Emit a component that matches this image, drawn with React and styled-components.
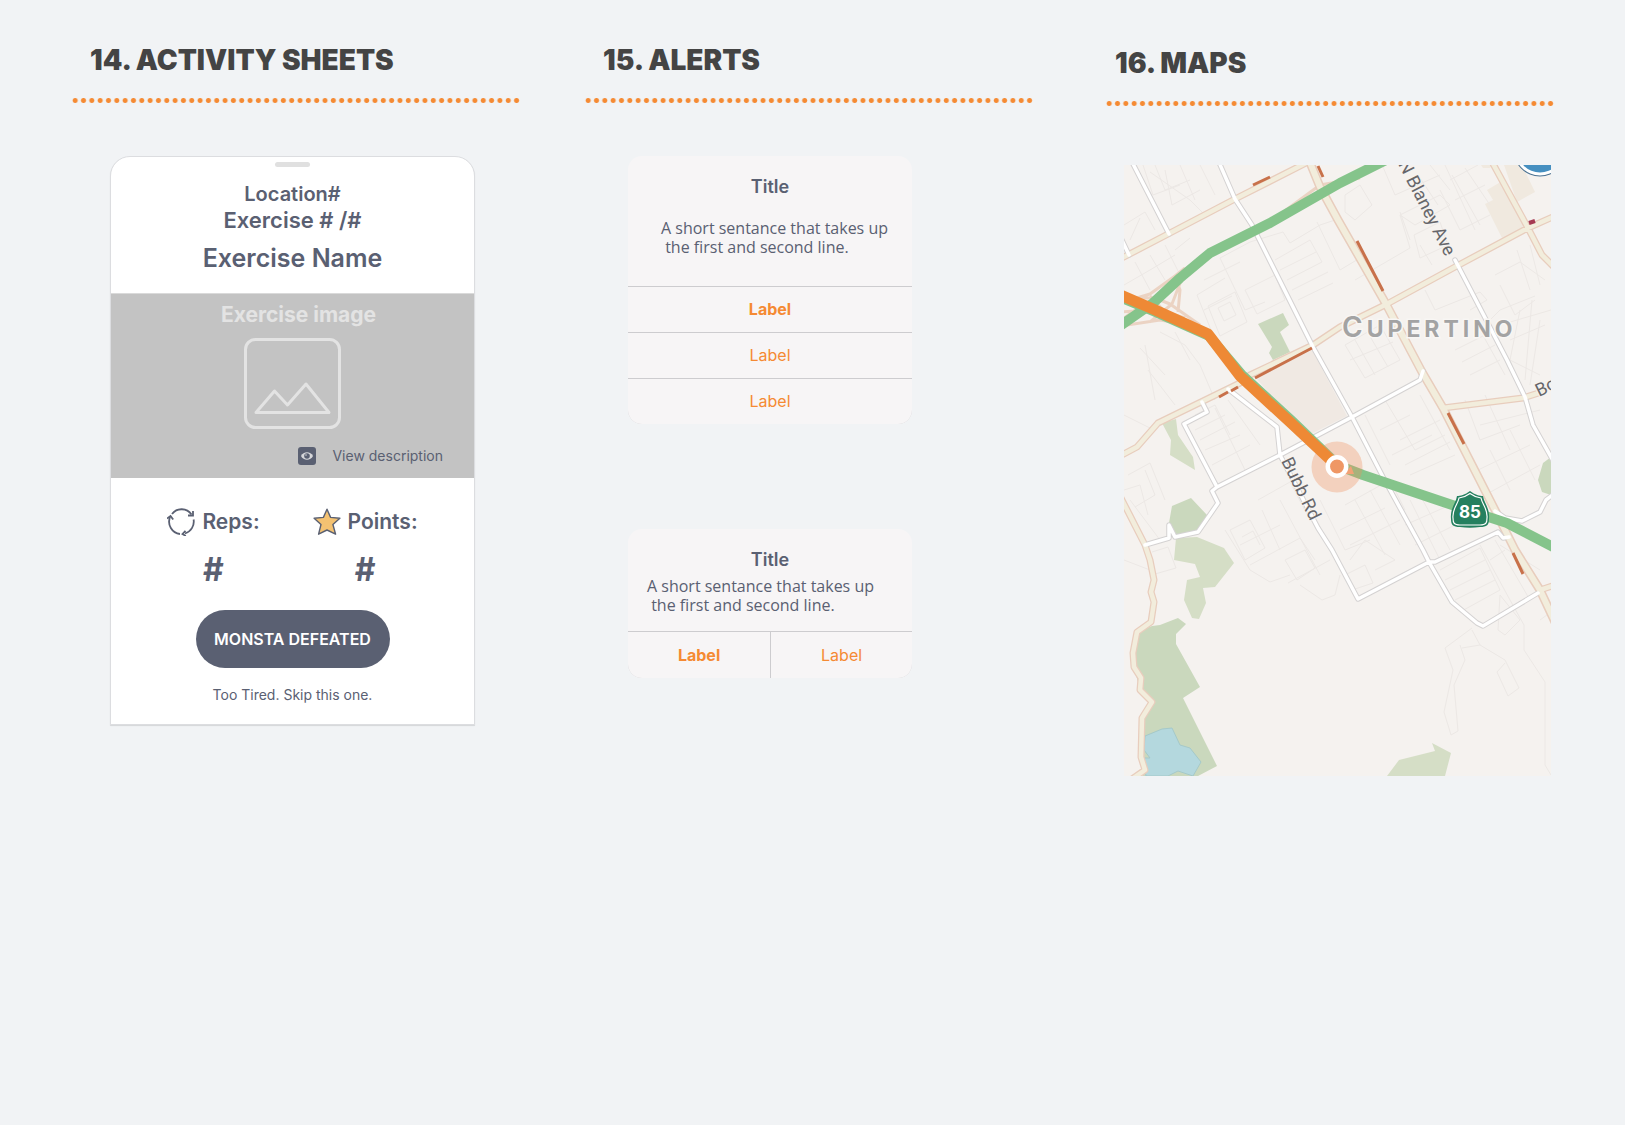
import React from 'react';
import styled, { createGlobalStyle } from 'styled-components';

const color = {
  page: '#f1f3f5',
  heading: '#444444',
  orange: '#f58a33',
  slate: '#5a6072',
  alert: '#f7f5f6',
  line: '#cdcccf',
  placeholder: '#c3c3c3',
  placeholderInk: '#e3e3e3',
};

const GlobalStyle = createGlobalStyle`
  *, *::before, *::after { box-sizing: border-box; }
  body {
    margin: 0;
    background: ${color.page};
    color: ${color.slate};
    font-family: Inter, "Liberation Sans", sans-serif;
  }
  h2, h3, p, dl, dt, dd { margin: 0; }
`;

/* ---------- Page ---------- */

const Page = styled.main`
  display: flex;
  align-items: flex-start;
  padding: 42px 70px 42px 71px;
  min-height: 100vh;
`;

const Column = styled.section`
  flex: 1 1 0;
  min-width: 0;
  margin-right: ${(p) => p.$gutter || 0}px;
  padding-top: ${(p) => p.$drop || 0}px;
`;

const Heading = styled.h2`
  padding-left: ${(p) => p.$indent}px;
  font-size: 28px;
  line-height: 36px;
  font-weight: 900;
  color: ${color.heading};
  white-space: nowrap;
`;

const DottedRule = styled.hr`
  height: 5px;
  margin: 20px 0 0;
  border: 0;
  background-image: radial-gradient(circle at center, ${color.orange} 2px, transparent 3px);
  background-size: calc(100% / 54) 5px;
`;

/* ---------- Activity sheet ---------- */

const Sheet = styled.article`
  display: flex;
  flex-direction: column;
  align-items: center;
  margin: 53px 46px 0 39px;
  padding: 5px 0 19px;
  border: 1px solid #dcdde0;
  border-radius: 20px 20px 0 0;
  background: #ffffff;
  box-shadow: 0 1px 1px rgba(0, 0, 0, 0.12);
`;

const Handle = styled.span`
  width: 35px;
  height: 5px;
  margin-bottom: 14px;
  border-radius: 3px;
  background: #e0e0e0;
`;

const SheetLine = styled.p`
  font-size: ${(p) => p.$size}px;
  line-height: 26px;
  font-weight: 600;
`;

const SheetTitle = styled.h3`
  margin: 9px 0 19px;
  font-size: 25px;
  line-height: 32px;
  font-weight: 600;
`;

const Preview = styled.figure`
  align-self: stretch;
  display: flex;
  flex-direction: column;
  align-items: center;
  margin: 0;
  padding: 8px 0 13px;
  border-top: 1px solid #dadada;
  background: ${color.placeholder};
`;

const PreviewCaption = styled.figcaption`
  padding-left: 12px;
  margin-bottom: 10px;
  font-size: 21px;
  line-height: 26px;
  font-weight: 700;
  color: ${color.placeholderInk};
`;

const DescriptionLink = styled.a`
  align-self: flex-end;
  display: flex;
  align-items: center;
  gap: 16px;
  margin: 18px 31px 0 0;
  font-size: 14px;
  line-height: 18px;
  color: ${color.slate};
  text-decoration: none;
`;

const Stats = styled.dl`
  display: flex;
  gap: 53px;
  margin-top: 30px;
`;

const Stat = styled.div`
  display: flex;
  flex-direction: column;
  align-items: center;
  gap: 16px;
`;

const StatName = styled.dt`
  display: flex;
  align-items: center;
  gap: 7px;
  font-size: 21px;
  line-height: 28px;
  font-weight: 600;
`;

const StatValue = styled.dd`
  font-size: 32px;
  line-height: 36px;
  font-weight: 700;
`;

const PrimaryButton = styled.button`
  width: 194px;
  height: 58px;
  margin-top: 22px;
  padding: 0;
  border: 0;
  border-radius: 29px;
  background: ${color.slate};
  color: #ffffff;
  font: 600 16px/20px Inter, sans-serif;
  white-space: nowrap;
`;

const TextButton = styled.button`
  margin-top: 17px;
  padding: 0;
  border: 0;
  background: none;
  color: ${color.slate};
  font: 400 14px/20px Inter, sans-serif;
`;

/* ---------- Alerts ---------- */

const AlertStack = styled.div`
  display: flex;
  flex-direction: column;
  gap: 105px;
  margin: 53px 0 0 44px;
  max-width: 284px;
`;

const AlertBox = styled.article`
  overflow: hidden;
  border-radius: 14px;
  background: ${color.alert};
`;

const AlertTitle = styled.h3`
  padding-top: 20px;
  font-size: 18px;
  line-height: 22px;
  font-weight: 600;
  text-align: center;
`;

const AlertText = styled.p`
  padding: ${(p) => (p.$compact ? '6px 0 16px 19px' : '21px 0 29px 33px')};
  font: 500 16px/19px "Open Sans", sans-serif;
  white-space: pre;
`;

const Actions = styled.div`
  display: flex;
  flex-direction: ${(p) => (p.$row ? 'row' : 'column')};
  gap: 1px;
  padding-top: 1px;
  background: ${color.line};
`;

const ActionButton = styled.button`
  flex: 1 1 auto;
  height: ${(p) => (p.$row ? 46 : 45)}px;
  padding: ${(p) => (p.$row ? '0' : '0 0 2px')};
  border: 0;
  background: ${color.alert};
  color: ${color.orange};
  font: ${(p) => (p.$strong ? 700 : 400)} 16px/20px Inter, sans-serif;
`;

function Alert({ compact, labels }) {
  return (
    <AlertBox>
      <AlertTitle>Title</AlertTitle>
      <AlertText $compact={compact}>
        {'A short sentance that takes up\n the first and second line.'}
      </AlertText>
      <Actions $row={compact}>
        {labels.map((label, i) => (
          <ActionButton key={i} type="button" $row={compact} $strong={i === 0}>
            {label}
          </ActionButton>
        ))}
      </Actions>
    </AlertBox>
  );
}

/* ---------- Icons ---------- */

const PictureIcon = () => (
  <svg width="97" height="91" viewBox="0 0 97 91" fill="none" stroke={color.placeholderInk} strokeWidth="3" aria-hidden="true">
    <rect x="1.5" y="1.5" width="94" height="88" rx="10" />
    <path d="M12 74.5 30.500 53 43.500 67 62 46 85 74.500Z" strokeLinejoin="round" />
  </svg>
);

const EyeIcon = () => (
  <svg width="18" height="18" viewBox="0 0 18 18" aria-hidden="true">
    <rect width="18" height="18" rx="3" fill={color.slate} />
    <path d="M3 9C5.500 4 12.500 4 15 9 12.500 14 5.500 14 3 9Z" fill="#d6d7da" />
    <circle cx="9" cy="9" r="2.800" fill={color.slate} />
    <circle cx="8" cy="8" r="0.900" fill="#a9acb5" />
  </svg>
);

const RepsIcon = () => (
  <svg width="28" height="28" viewBox="0 0 28 28" fill="none" stroke={color.slate} strokeWidth="1.8" aria-hidden="true">
    <path d="M5 6A12 12 0 0 1 24.500 6.500" />
    <path d="M26.600 11.500A12.500 12.500 0 0 1 18 25.500" />
    <path d="M13 26A12.500 12.500 0 0 1 3 9" />
    <path d="M0 10.500 3.500 8 6.200 11.500" />
    <path d="M26 3V7.500H21" />
    <path d="M18.500 22.800 15.500 26 18.800 28" />
  </svg>
);

const StarIcon = () => (
  <svg width="28" height="28" viewBox="0 0 28 28" aria-hidden="true">
    <path
      d="M14 1.200 17.600 9.400 26.900 10.300 19.900 16.500 22.600 26.200 14 22 5.600 26.200 8 16.500 1.100 10.300 10.400 9.400Z"
      fill="#f4c272"
      stroke={color.slate}
      strokeWidth="1.4"
      strokeLinejoin="round"
    />
  </svg>
);

/* ---------- Map ---------- */

const MapFrame = styled.figure`
  margin: 59px 4px 0 19px;
`;

const MapCanvas = styled.svg`
  display: block;
  width: 100%;
  height: auto;
  background: #f5f2ef;
`;

const StreetName = styled.text`
  font: 400 18px Roboto, sans-serif;
  fill: #66666a;
  stroke: #f5f2ef;
  stroke-width: 2px;
  paint-order: stroke;
`;

const CityName = styled.text`
  font: 700 23px Inter, sans-serif;
  letter-spacing: 4px;
  fill: #a3a3a3;
  stroke: #f8f6f4;
  stroke-width: 3px;
  paint-order: stroke;
`;

const CityInitial = styled.tspan`
  font-size: 28px;
  font-weight: 600;
`;

const ShieldNumber = styled.text`
  font: 700 17px Inter, sans-serif;
  fill: #ffffff;
  text-anchor: middle;
`;

const woods = [
  'M1258 324 1283 313 1289 325 1280 332 1290 352 1273 360 1269 353 1272 347Z',
  'M1172 506 1191 498 1207 515 1195 533 1175 535 1169 523Z',
  'M1152 626 1160 625 1178 618 1186 624 1176 634 1176 644 1200 687 1183 698 1217 766 1198 776 1143 776 1142 720 1152 702 1140 690 1134 667 1133 653 1137 632Z',
  'M1551 457 1543 463 1538 480 1542 492 1551 495Z',
];

const meadows = [
  'M1162 423 1176 419 1178 435 1193 457 1195 470 1170 455 1171 440Z',
  'M1176 538 1197 537 1224 548 1234 563 1215 587 1203 588 1206 603 1199 619 1192 618 1184 600 1187 580 1200 577 1195 564 1174 560Z',
  'M1387 776 1399 760 1435 751 1432 743 1451 753 1445 776Z',
];

const blocks = [
  'M1487 190 1504 180 1528 228 1502 238 1485 204 1493 200Z',
  'M1504 165 1522 165 1535 192 1517 202Z',
  'M1481 165H1492L1490 168H1483Z',
];

const parcels = [
  'M1143 165 1153 195 1180 185M1155 165 1165 190 1190 180M1180 165 1195 200M1200 165 1215 195M1150 172 1190 200 1205 215',
  'M1124 225 1145 212 1155 230M1130 240 1140 218M1165 170 1172 205 1200 190',
  'M1124 285 1150 270 1175 255M1135 262 1150 290M1150 255 1165 280M1165 245 1180 275 1155 290M1175 250 1190 238',
  'M1220 258 1245 310 1265 302M1220 258 1250 242 1283 232 1290 243 1320 225 1338 219M1197 295 1225 278M1204 310 1232 296M1197 295 1215 340M1204 280 1240 262',
  'M1208 306 1235 292 1247 322 1220 336ZM1218 308 1230 302 1236 315 1224 321ZM1245 290 1275 275 1285 300 1257 314Z',
  'M1275 260 1310 240 1322 262 1287 280M1280 270 1316 252M1292 290 1328 272M1298 300 1333 283M1317 222 1340 270 1365 255',
  'M1160 332 1185 345 1200 365 1215 400M1140 348 1165 375M1175 332 1190 360M1148 370 1175 405M1145 345 1155 400M1124 415 1150 428',
  'M1345 195 1360 185 1372 205 1355 220 1345 212ZM1355 280 1410 248 1400 215M1400 215 1440 195 1450 205 1415 225ZM1414 235 1440 222 1448 245 1420 258Z',
  'M1418 175 1438 205M1440 190 1460 230 1490 215M1452 175 1480 225M1465 168 1490 205M1450 180 1478 165M1455 200 1485 185M1420 245 1432 265',
  'M1380 160 1395 195 1440 175M1430 165 1450 190M1445 165 1475 230M1400 212 1410 240',
  'M1345 345 1380 325 1400 360 1365 378ZM1355 340 1375 375M1368 333 1388 367M1350 360 1393 342M1425 290 1435 310 1480 292M1480 292 1487 300 1470 310',
  'M1495 275 1520 262 1545 280M1500 285 1515 315 1535 300M1517 250 1530 290M1530 245 1540 285M1480 330 1500 310 1535 296M1500 325 1551 310M1510 340 1545 325M1520 310 1510 360 1540 375M1532 300 1525 380M1540 320 1530 385',
  'M1365 415 1390 465M1385 400 1415 450 1445 435M1400 440 1440 420M1392 455 1432 435M1405 465 1450 442M1410 475 1455 455M1380 430 1410 415M1420 395 1450 450',
  'M1455 350 1485 335M1462 362 1495 345M1470 375 1500 360M1480 330 1505 375M1465 400 1480 440 1520 425M1485 395 1510 450M1480 425 1540 410',
  'M1195 415 1215 405 1230 435M1195 430 1225 415M1200 440 1235 422M1205 450 1240 435M1212 465 1250 445M1215 408 1245 470M1228 400 1260 445',
  'M1258 500 1290 482 1310 520M1262 510 1280 550M1230 530 1250 520 1265 548 1245 560ZM1242 537 1253 531 1260 545M1225 530 1250 570 1270 582 1290 575',
  'M1345 505 1390 480 1405 510M1340 530 1385 508M1350 545 1400 520M1355 500 1385 555M1370 490 1400 545M1320 500 1345 550 1370 540',
  'M1280 500 1320 575M1240 545 1280 525M1250 565 1300 538 1315 560M1285 560 1305 550 1315 568 1297 580ZM1288 583 1330 560M1300 585 1322 600 1335 595 1340 575',
  'M1350 560 1365 540 1395 560 1375 570M1345 575 1365 565 1373 583 1352 590M1410 500 1440 560M1420 495 1450 550M1405 525 1450 505M1415 545 1465 520',
  'M1440 570 1480 548 1500 590 1460 612M1445 580 1485 560M1450 590 1490 570M1455 600 1495 580M1480 545 1510 600 1524 625 1524 650 1545 682 1545 765 1551 775',
  'M1495 540 1530 600M1490 560 1505 550M1500 595 1520 620 1505 635 1498 630ZM1472 628 1445 648 1453 670 1444 712 1451 735 1458 731 1454 685 1465 660 1460 645',
  'M1472 630 1480 645 1462 648M1480 645 1505 660 1519 688 1508 696 1497 672 1505 663',
  'M1124 560 1150 570M1152 552 1168 547 1176 568 1155 574M1128 475 1150 463 1165 500M1124 490 1140 485 1148 515M1130 500 1160 540M1145 470 1155 495 1135 507',
  'M1485 495 1540 465M1478 470 1530 445M1490 450 1510 490M1510 430 1535 480M1500 545 1540 570M1540 620 1551 612',
];

const boulevards = [
  'M1120 259 1170 233 1235 199 1308 162',
  'M1309 160 1320 187 1338 220 1386 304 1422 372 1443 408 1495 510 1515 550 1540 590 1555 622',
  'M1555 216 1528 228 1455 267 1387 304 1340 327 1313 345 1250 375 1240 383 1158 423 1137 447 1120 456',
  'M1491 160 1528 228 1542 255 1555 268',
  'M1120 496 1145 545 1150 560 1154 580 1151 592 1154 602 1151 622 1137 632 1133 653 1134 667 1141 678 1140 690 1152 702 1142 718 1141 757 1145 770 1132 779',
  'M1443 408 1523 398 1545 391',
  'M1540 590 1555 585',
];

const streets = [
  'M1131 160 1169 234',
  'M1120 236 1129 255',
  'M1218 160 1235 199 1252 225 1313 347 1352 417 1383 477 1423 550 1429 562 1452 602 1477 623 1483 626 1538 593',
  'M1455 260 1507 360 1525 397 1533 425 1555 464',
  'M1423 371 1420 380 1352 417 1280 455 1217 487 1212 491 1218 503 1198 532 1175 537 1169 525 1169 538 1145 545',
  'M1202 402 1207 412 1184 424 1217 487',
  'M1228 389 1277 427 1280 455 1318 528 1332 550 1358 599 1429 562 1435 562 1498 532 1503 538 1509 537',
  'M1495 511 1505 518 1522 521 1540 512 1546 500 1555 493',
];

const ramps = [
  'M1120 303 1150 294 1175 276 1180 290 1178 312M1120 326 1160 320 1190 325',
  'M1120 312 1150 310 1180 318 1198 325M1124 298 1155 298 1170 304 1200 325',
  'M1182 278 1172 304 1150 322M1150 296 1165 312 1185 318M1124 318 1146 302',
  'M1175 276 1185 268M1286 210 1320 185 1360 178M1320 195 1345 180',
];

const slowdowns = [
  'M1253 185 1270 177',
  'M1318 166 1323 177',
  'M1357 241 1370 266 1383 291',
  'M1255 378 1312 348',
  'M1219 397 1228 392M1231 391 1238 387',
  'M1448 413 1464 444',
  'M1513 553 1523 574',
];

function RoadMap() {
  return (
    <MapCanvas viewBox="1124 165 427 611" role="img" aria-label="Map of Cupertino with a highlighted route">
      <path d="M1256 378 1312 350 1347 416 1307 436Z" fill="#f0e9e3" />
      <path d={blocks.join('')} fill="#f0e9df" />
      <path d={woods.join('')} fill="#cad8bd" />
      <path d={meadows.join('')} fill="#d5dec6" />
      <path
        d="M1145 736 1162 729 1172 728 1180 745 1190 748 1201 762 1193 776 1178 771 1168 776H1146L1143 758 1150 758 1144 750Z"
        fill="#b4d8de"
        stroke="#a5c9c9"
      />
      <path d={parcels.join('')} fill="none" stroke="#ece8e5" />
      <g fill="none" strokeLinejoin="round">
        <path d={ramps.join('')} stroke="#ebd3c3" strokeWidth="3" />
        <path d={boulevards.join('')} stroke="#e8cdbd" strokeWidth="7" />
        <path d={boulevards[1]} stroke="#e8cdbd" strokeWidth="9" />
        <path d={streets.join('')} stroke="#d4d2d2" strokeWidth="5.500" strokeLinecap="round" />
        <path d={boulevards.join('')} stroke="#f2eddc" strokeWidth="4.500" />
        <path d={boulevards[1]} stroke="#f2eddc" strokeWidth="6" />
        <path d={streets.join('')} stroke="#ffffff" strokeWidth="3.500" strokeLinecap="round" />
        <path d={slowdowns.join('')} stroke="#c8714a" strokeWidth="3" />
        <path d="M1529 223 1535 221" stroke="#a63a52" strokeWidth="4" />
        <path d="M1120 326 1153 303 1180 278 1210 253 1270 223 1340 183 1386 160" stroke="#85c48b" strokeWidth="10" />
        <path d="M1120 297 1153 311 1209 336 1242 375 1292 421 1339 466" stroke="#85c48b" strokeWidth="10" />
        <path d="M1337 465 1363 475 1470 511 1507 523 1555 548" stroke="#85c48b" strokeWidth="10" />
      </g>
      <circle cx="1337" cy="467" r="25.500" fill="#ef8f5c" fillOpacity="0.330" />
      <path d="M1344 474 1351 466 1354 474Z" fill="#f2a276" />
      <path
        d="M1118 294 1153 309 1208 334 1240 376 1290 422 1336 465"
        fill="none"
        stroke="#ee8935"
        strokeWidth="11"
        strokeLinejoin="round"
      />
      <circle cx="1337" cy="466.500" r="9.200" fill="#ef9765" stroke="#ffffff" strokeWidth="4.500" />
      <circle cx="1540" cy="150" r="26.500" fill="#4a7191" />
      <circle cx="1540" cy="150" r="25.500" fill="#ffffff" />
      <circle cx="1540" cy="150" r="22.500" fill="#468fc0" />
      <StreetName transform="translate(1398 164) rotate(63)">N Blaney Ave</StreetName>
      <StreetName transform="translate(1281 461) rotate(64)">Bubb Rd</StreetName>
      <StreetName transform="translate(1539 397) rotate(-26)">Bo</StreetName>
      <CityName x="1342" y="337"><CityInitial>C</CityInitial>UPERTINO</CityName>
      <path
        d="M1470 491C1475 495 1480 496 1483 496 1484 503 1490 508 1489 519 1489 525 1487 527 1480 527 1473 528 1467 528 1460 527 1453 527 1451 525 1451 519 1450 508 1456 503 1457 496 1460 496 1465 495 1470 491Z"
        fill="#25805f"
      />
      <path
        d="M1470 493.500C1474 496.500 1478 497.500 1481 498 1482 504 1488 509 1487 518 1487 523 1486 525 1480 525H1460C1454 525 1453 523 1453 518 1452 509 1458 504 1459 498 1462 497.500 1466 496.500 1470 493.500Z"
        fill="#25805f"
        stroke="#ffffff"
        strokeWidth="1.200"
      />
      <ShieldNumber x="1470" y="518">85</ShieldNumber>
    </MapCanvas>
  );
}

/* ---------- App ---------- */

export default function App() {
  return (
    <>
      <GlobalStyle />
      <Page>
        <Column $gutter={63}>
          <Heading $indent={19}>14. ACTIVITY SHEETS</Heading>
          <DottedRule />
          <Sheet>
            <Handle />
            <SheetLine $size={20}>Location#</SheetLine>
            <SheetLine $size={22}>Exercise # /#</SheetLine>
            <SheetTitle>Exercise Name</SheetTitle>
            <Preview>
              <PreviewCaption>Exercise image</PreviewCaption>
              <PictureIcon />
              <DescriptionLink href="#description">
                <EyeIcon />
                View description
              </DescriptionLink>
            </Preview>
            <Stats>
              <Stat>
                <StatName><RepsIcon />Reps:</StatName>
                <StatValue>#</StatValue>
              </Stat>
              <Stat>
                <StatName><StarIcon />Points:</StatName>
                <StatValue>#</StatValue>
              </Stat>
            </Stats>
            <PrimaryButton type="button">MONSTA DEFEATED</PrimaryButton>
            <TextButton type="button">Too Tired. Skip this one.</TextButton>
          </Sheet>
        </Column>

        <Column $gutter={71}>
          <Heading $indent={19}>15. ALERTS</Heading>
          <DottedRule />
          <AlertStack>
            <Alert labels={['Label', 'Label', 'Label']} />
            <Alert compact labels={['Label', 'Label']} />
          </AlertStack>
        </Column>

        <Column $drop={3}>
          <Heading $indent={10}>16. MAPS</Heading>
          <DottedRule />
          <MapFrame>
            <RoadMap />
          </MapFrame>
        </Column>
      </Page>
    </>
  );
}
